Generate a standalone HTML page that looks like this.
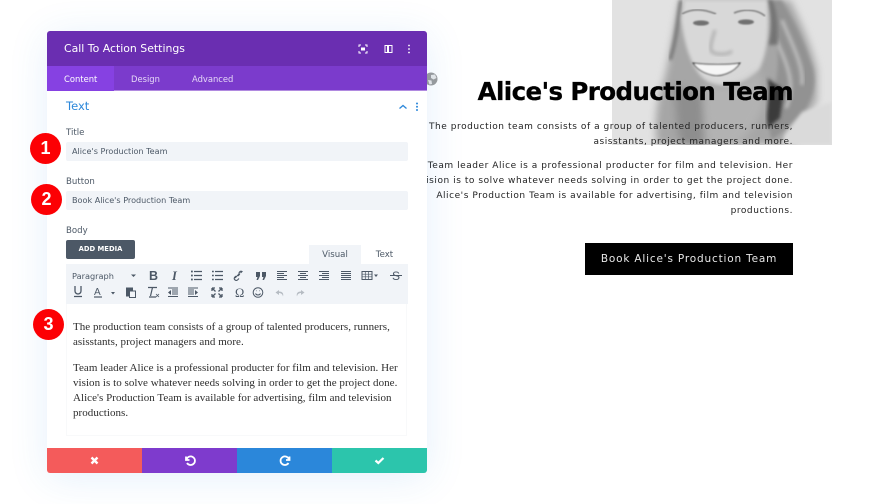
<!DOCTYPE html>
<html><head><meta charset="utf-8">
<style>
html,body{margin:0;padding:0;background:#fff}
#p{position:relative;width:880px;height:504px;overflow:hidden;background:#fff;font-family:"Liberation Sans",sans-serif}
.a{position:absolute;white-space:nowrap}
.r{position:absolute;white-space:nowrap;right:87px;text-align:right;font-family:"DejaVu Sans",sans-serif;font-size:9px;letter-spacing:.545px;color:#222;line-height:16px}
.ui{font-family:"DejaVu Sans",sans-serif}
.s{position:absolute;white-space:nowrap;font-family:"Liberation Serif",serif;font-size:11px;letter-spacing:.04px;color:#2d2d2d;line-height:16px}
.n{position:absolute;width:31px;height:31px;border-radius:50%;background:#fc0004;color:#fff;font-size:18px;font-weight:bold;text-align:center;line-height:30px}
svg.i{position:absolute;overflow:visible}
.f{position:absolute;left:66px;width:342px;height:19px;background:#f1f4f8;border-radius:2px;font-family:"DejaVu Sans",sans-serif;font-size:8.1px;color:#4c5866;line-height:19px;text-indent:6px}
.l{position:absolute;left:66px;font-family:"DejaVu Sans",sans-serif;font-size:8.6px;color:#4c5866}
.b{position:absolute;top:448px;height:25px}
</style></head><body><div id="p">

<svg class="i" style="left:612px;top:0" width="220" height="145" viewBox="0 0 220 145">
<defs>
<filter id="b4"><feGaussianBlur stdDeviation="4"/></filter>
<filter id="b2"><feGaussianBlur stdDeviation="1.800"/></filter>
<filter id="b1"><feGaussianBlur stdDeviation=".8"/></filter>
<clipPath id="c"><rect width="220" height="145"/></clipPath>
</defs>
<g clip-path="url(#c)">
<rect width="220" height="145" fill="#e2e2e2"/>
<path d="M68 0C62 30 58 55 52 80C44 100 42 125 45 145L180 145L205 100L205 70C198 40 185 15 178 0Z" fill="#a6a6a6" filter="url(#b4)"/>
<path d="M155 0C165 30 170 60 162 90C155 105 155 125 160 140L190 115C203 95 206 80 198 60C190 35 178 15 170 0Z" fill="#929292" filter="url(#b2)"/>
<path d="M170 20C180 45 192 65 190 85M164 40C176 65 184 85 174 108" stroke="#bdbdbd" stroke-width="3.500" fill="none" filter="url(#b2)"/>
<path d="M155 78C160 92 152 108 156 128L168 118L172 90Z" fill="#3a3a3a" filter="url(#b2)"/>
<path d="M69 0C66 20 64 42 58 60" stroke="#707070" stroke-width="3.500" fill="none" filter="url(#b2)"/>
<path d="M155 0C160 12 160 30 156 45L166 45C166 25 165 10 160 0Z" fill="#737373" filter="url(#b2)"/>
<path d="M60 85C66 100 62 125 70 145L92 145L90 95Z" fill="#8e8e8e" filter="url(#b4)"/>
<path d="M72 0L155 0C158 25 156 52 147 70C134 86 110 90 96 82C80 72 72 45 69 18Z" fill="#d8d8d8" filter="url(#b2)"/>
<path d="M92 82C105 92 132 88 148 70L152 105C145 125 130 145 120 145L96 145Z" fill="#b2b2b2" filter="url(#b4)"/>
<path d="M70 14C80 8 92 9 104 14" stroke="#7a7a7a" stroke-width="1.500" fill="none" filter="url(#b1)"/>
<path d="M122 13C134 8 146 10 153 16" stroke="#7a7a7a" stroke-width="1.500" fill="none" filter="url(#b1)"/>
<ellipse cx="89" cy="23" rx="8" ry="2.600" fill="#707070" filter="url(#b1)"/>
<ellipse cx="134" cy="22" rx="8" ry="2.600" fill="#707070" filter="url(#b1)"/>
<path d="M103 30C100 40 97 48 100 52C105 55 116 55 120 51" stroke="#a8a8a8" stroke-width="2.500" fill="none" filter="url(#b2)"/>
<path d="M81 63C95 65 118 65 128 63C122 73 108 77 100 75C91 73 85 69 81 63Z" fill="#f6f6f6" stroke="#333" stroke-width="1" filter="url(#b1)"/>
<path d="M220 102L190 112L172 135L170 145L220 145Z" fill="#dadada" filter="url(#b2)"/>
</g>
</svg>

<div class="a" style="left:418px;top:65px;width:26px;height:26px;border-radius:50%;background:#fff"></div>
<svg class="i" style="left:424px;top:72px" width="14" height="14" viewBox="0 0 14 14"><circle cx="7" cy="7" r="6.500" fill="#9b9b9b"/><path d="M7 3L11 2.500L12.500 6L9.500 7.500L7 6ZM4 8L7.500 8.500L8 12L5.500 12.500Z" fill="#e8e8e8"/></svg>

<div class="a" style="right:87px;top:73px;font-family:'DejaVu Sans',sans-serif;font-weight:bold;font-size:24.500px;letter-spacing:-.59px;color:#000;line-height:38px;-webkit-text-stroke:.3px #000">Alice's Production Team</div>
<div class="r" style="top:119px">The production team consists of a group of talented producers, runners,</div>
<div class="r" style="top:134px">asisstants, project managers and more.</div>
<div class="r" style="top:158px">Team leader Alice is a professional producter for film and television. Her</div>
<div class="r" style="top:173px">vision is to solve whatever needs solving in order to get the project done.</div>
<div class="r" style="top:188px">Alice's Production Team is available for advertising, film and television</div>
<div class="r" style="top:203px">productions.</div>
<div class="a" style="left:585px;top:243px;width:208px;height:32px;background:#000;color:#e8e8e8;font-family:'DejaVu Sans',sans-serif;font-size:10.500px;letter-spacing:.82px;line-height:32px;text-align:center">Book Alice's Production Team</div>

<div class="a" style="left:47px;top:31px;width:380px;height:442px;background:#fff;border-radius:3px;box-shadow:0 5px 40px rgba(43,135,218,.12)"></div>
<div class="a" style="left:47px;top:31px;width:380px;height:35px;background:#6a2eb1;border-radius:3px 3px 0 0"></div>
<div class="a" style="left:47px;top:66px;width:380px;height:25px;background:#7b3bcc;border-bottom:1px solid #b18ae0;box-sizing:border-box"></div>
<div class="a" style="left:47px;top:66px;width:67px;height:25px;background:#8641e2"></div>
<div class="a ui" style="left:64px;top:41px;font-size:10.900px;color:#fff;line-height:15px">Call To Action Settings</div>
<div class="a ui" style="left:64px;top:73px;font-size:8.400px;color:#fff;line-height:13px">Content</div>
<div class="a ui" style="left:131px;top:73px;font-size:8.400px;color:#e6d9f7;line-height:13px">Design</div>
<div class="a ui" style="left:192px;top:73px;font-size:8.400px;color:#e6d9f7;line-height:13px">Advanced</div>

<svg class="i" style="left:358px;top:44px" width="60" height="12" viewBox="0 0 60 12" fill="none" stroke="#fff" stroke-width="1">
<path d="M1 3V1H3M7 1H9V3M9 7V9H7M3 9H1V7"/><rect x="3" y="3.500" width="4" height="3" fill="#fff" stroke="none"/>
<rect x="27" y="1.500" width="7" height="7"/><path d="M30 1.500V8.500" stroke-width="2"/>
<circle cx="51" cy="1.500" r=".9" fill="#fff" stroke="none"/><circle cx="51" cy="5" r=".9" fill="#fff" stroke="none"/><circle cx="51" cy="8.500" r=".9" fill="#fff" stroke="none"/>
</svg>

<div class="a ui" style="left:66px;top:98px;font-size:11.500px;color:#2b87da;line-height:16px">Text</div>
<svg class="i" style="left:398px;top:102px" width="24" height="10" viewBox="0 0 24 10" fill="none">
<path d="M1.500 6.500L5 3.500L8.500 6.500" stroke="#2b87da" stroke-width="1.300"/>
<circle cx="19" cy="1.500" r="1" fill="#2b87da"/><circle cx="19" cy="4.800" r="1" fill="#2b87da"/><circle cx="19" cy="8" r="1" fill="#2b87da"/>
</svg>

<div class="l" style="top:128px">Title</div>
<div class="f" style="top:142px">Alice's Production Team</div>
<div class="l" style="top:177px">Button</div>
<div class="f" style="top:191px">Book Alice's Production Team</div>
<div class="l" style="top:226px">Body</div>

<div class="n" style="left:30px;top:133px">1</div>
<div class="n" style="left:31px;top:184px">2</div>
<div class="n" style="left:33px;top:309px">3</div>

<div class="a ui" style="left:66px;top:240px;width:69px;height:19px;background:#4c5866;border-radius:2px;color:#fff;font-size:6.800px;font-weight:bold;line-height:19px;text-align:center">ADD MEDIA</div>

<div class="a" style="left:309px;top:245px;width:52px;height:19px;background:#f1f4f8"></div>
<div class="a ui" style="left:309px;top:245px;width:52px;font-size:8.600px;color:#4c5866;line-height:20px;text-align:center">Visual</div>
<div class="a ui" style="left:361px;top:245px;width:47px;font-size:8.600px;color:#4c5866;line-height:20px;text-align:center">Text</div>
<div class="a" style="left:66px;top:264px;width:342px;height:40px;background:#f1f4f8"></div>
<div class="a ui" style="left:72px;top:270px;font-size:8.200px;color:#4c5866;line-height:12px">Paragraph</div>

<svg class="i" style="left:66px;top:264px" width="342" height="40" viewBox="0 0 342 40" fill="none" stroke="#4c5866" stroke-width="1.200">
<path d="M65 10.500L70 10.500L67.500 13Z" fill="#4c5866" stroke="none"/>
<text x="83" y="16" font-family="Liberation Sans,sans-serif" font-weight="bold" font-size="12.500" fill="#4c5866" stroke="none">B</text>
<text x="106" y="16" font-family="Liberation Serif,serif" font-style="italic" font-weight="bold" font-size="12.500" fill="#4c5866" stroke="none">I</text>
<path d="M128 7.500H136M128 11.500H136M128 15.500H136" stroke-width="1.300"/><path d="M125 7.500H126.800M125 11.500H126.800M125 15.500H126.800" stroke-width="1.700"/>
<path d="M149 7.500H157M149 11.500H157M149 15.500H157" stroke-width="1.300"/><path d="M146 7.500H147.800M146 11.500H147.800M146 15.500H147.800" stroke-width="1.500"/>
<path d="M169 14L173 10M170 12L168.500 13.500A2 2 0 0 0 171.500 16L173 14.500M172 12L173.500 10.500A2 2 0 0 1 176 7.500L174.500 9" stroke-width="1.100"/>
<path d="M190 8H194V12L192 16H190.500L191.500 13H190ZM196 8H200V12L198 16H196.500L197.500 13H196Z" fill="#4c5866" stroke="none"/>
<path d="M211 7.500H221M211 9.500H218M211 11.500H221M211 13.500H218M211 15.500H221" stroke-width="1.100"/>
<path d="M232 7.500H242M234 9.500H240M232 11.500H242M234 13.500H240M232 15.500H242" stroke-width="1.100"/>
<path d="M253 7.500H263M256 9.500H263M253 11.500H263M256 13.500H263M253 15.500H263" stroke-width="1.100"/>
<path d="M275 7.500H285M275 9.500H285M275 11.500H285M275 13.500H285M275 15.500H285" stroke-width="1.100"/>
<rect x="296" y="7.500" width="10" height="8" stroke-width="1"/><path d="M296 10.200H306M296 12.800H306M299.300 7.500V15.500M302.600 7.500V15.500" stroke-width=".7"/>
<path d="M308 10.500H312L310 13Z" fill="#4c5866" stroke="none"/>
<text x="326" y="16" font-family="Liberation Sans,sans-serif" font-size="12" fill="#4c5866" stroke="none">S</text><path d="M324 11.500H336" stroke-width="1"/>
<path d="M9 22V27A3 3 0 0 0 15 27V22M8 32.500H16" stroke-width="1.300"/>
<text x="28" y="31" font-family="Liberation Sans,sans-serif" font-size="10" fill="#4c5866" stroke="none">A</text><path d="M28 33H36" stroke-width="1.200"/>
<path d="M45 28H49L47 30.500Z" fill="#4c5866" stroke="none"/>
<rect x="60" y="23.500" width="7" height="9" fill="#4c5866" stroke="none"/><rect x="63.500" y="27" width="6" height="6.500" fill="#f1f4f8" stroke="#4c5866" stroke-width="1"/>
<path d="M82 23.500H91M86.500 23.500L84.500 32M83 33H90" stroke-width="1.200"/><path d="M90 30L93 33M93 30L90 33" stroke-width=".8"/>
<path d="M102 24H112M106 26H112M106 28H112M106 30H112M102 32.500H112" stroke-width="1.100"/><path d="M105 26V31L102 28.500Z" fill="#4c5866" stroke="none"/>
<path d="M122 24H132M122 26H128M122 28H128M122 30H128M122 32.500H132" stroke-width="1.100"/><path d="M129 26V31L132 28.500Z" fill="#4c5866" stroke="none"/>
<path d="M146 24H149M146 24V27M156 24H153M156 24V27M146 33H149M146 33V30M156 33H153M156 33V30M146 24L149.500 27.500M156 24L152.500 27.500M146 33L149.500 29.500M156 33L152.500 29.500" stroke-width="1.300"/>
<text x="169" y="33" font-family="Liberation Serif,serif" font-size="12.500" fill="#4c5866" stroke="none">Ω</text>
<circle cx="192" cy="28.500" r="4.800" stroke-width="1"/><path d="M189.500 29.500C190.500 31.500 193.500 31.500 194.500 29.500M190 26.800H190.500M193.500 26.800H194" stroke-width="1"/>
<path d="M213 26L209.500 28.500L213 31V29C215 29 216.500 30 217 32.500C218 29 216 27.500 213 27.500Z" fill="#b6bcc3" stroke="none"/>
<path d="M235 26L238.500 28.500L235 31V29C233 29 231.500 30 231 32.500C230 29 232 27.500 235 27.500Z" fill="#b6bcc3" stroke="none"/>
</svg>

<div class="a" style="left:66px;top:304px;width:341px;height:132px;border:1px solid #f8f9fa;border-top:0;box-sizing:border-box"></div>
<div class="s" style="left:73px;top:319px">The production team consists of a group of talented producers, runners,</div>
<div class="s" style="left:73px;top:334px">asisstants, project managers and more.</div>
<div class="s" style="left:73px;top:360px">Team leader Alice is a professional producter for film and television. Her</div>
<div class="s" style="left:73px;top:375px">vision is to solve whatever needs solving in order to get the project done.</div>
<div class="s" style="left:73px;top:390px">Alice's Production Team is available for advertising, film and television</div>
<div class="s" style="left:73px;top:405px">productions.</div>

<div class="b" style="left:47px;width:95px;background:#f45b5b;border-radius:0 0 0 3px"></div>
<div class="b" style="left:142px;width:95px;background:#7e3bcd"></div>
<div class="b" style="left:237px;width:95px;background:#2b87da"></div>
<div class="b" style="left:332px;width:95px;background:#2cc5ac;border-radius:0 0 3px 0"></div>
<svg class="i" style="left:47px;top:448px" width="380" height="25" viewBox="0 0 380 25" fill="none" stroke="#fff">
<path d="M44.500 9.500L50.500 15.500M50.500 9.500L44.500 15.500" stroke-width="2.400"/>
<path d="M139 8.500V12H142.500M139.500 11.500A4.300 4.300 0 1 1 140 15" stroke-width="1.800"/>
<path transform="translate(1.500 0)" d="M241 8.500V12H237.500M240.500 11.500A4.300 4.300 0 1 0 240 15" stroke-width="1.800"/>
<path transform="translate(-.5 0)" d="M329 12.500L331.800 15L337 10" stroke-width="2.200"/>
</svg>
</div></body></html>
